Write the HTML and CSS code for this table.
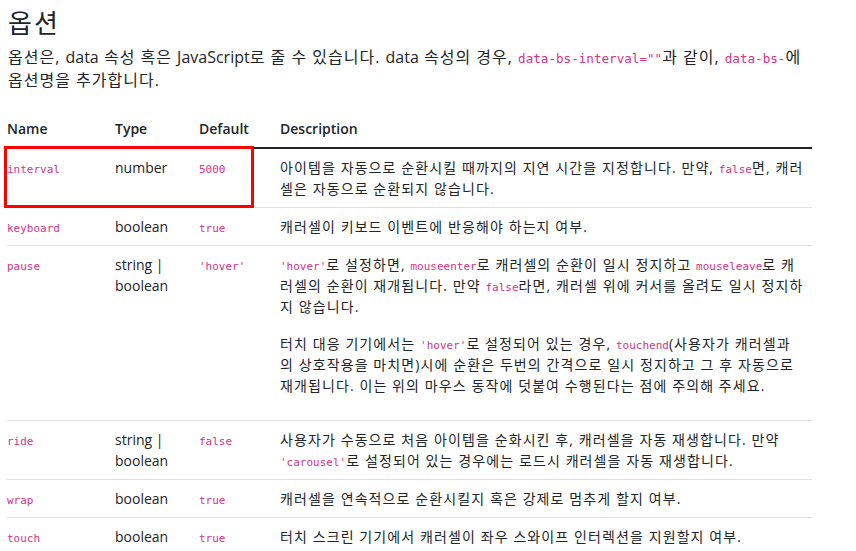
FILE: index.html
```html
<!DOCTYPE html>
<html lang="ko">
<head>
  <meta charset="UTF-8">
  <meta name="viewport" content="width=device-width, initial-scale=1.0">
  <title>옵션</title>
  <link rel="stylesheet" href="styles.css">
</head>
<body>
<div class="doc">
  <h2>옵션</h2>
  <p class="lead-text">옵션은, <span class="en">data</span> 속성 혹은 <span class="en">JavaScript</span>로 줄 수 있습니다. <span class="en">data</span> 속성의 경우, <code>data-bs-interval=""</code>과 같이, <code>data-bs-</code>에<br>옵션명을 추가합니다.</p>

  <div class="table-wrap">
    <table class="opt-table">
      <colgroup>
        <col class="c-name">
        <col class="c-type">
        <col class="c-default">
        <col>
      </colgroup>
      <thead>
        <tr>
          <th>Name</th>
          <th>Type</th>
          <th>Default</th>
          <th>Description</th>
        </tr>
      </thead>
      <tbody>
        <tr>
          <td><code>interval</code></td>
          <td>number</td>
          <td><code>5000</code></td>
          <td class="desc">아이템을 자동으로 순환시킬 때까지의 지연 시간을 지정합니다. 만약, <code>false</code>면, 캐러<br>셀은 자동으로 순환되지 않습니다.</td>
        </tr>
        <tr>
          <td><code>keyboard</code></td>
          <td>boolean</td>
          <td><code>true</code></td>
          <td class="desc">캐러셀이 키보드 이벤트에 반응해야 하는지 여부.</td>
        </tr>
        <tr>
          <td><code>pause</code></td>
          <td>string | boolean</td>
          <td><code>'hover'</code></td>
          <td class="desc">
            <p><code>'hover'</code>로 설정하면, <code>mouseenter</code>로 캐러셀의 순환이 일시 정지하고 <code>mouseleave</code>로 캐<br>러셀의 순환이 재개됩니다. 만약 <code>false</code>라면, 캐러셀 위에 커서를 올려도 일시 정지하<br>지 않습니다.</p>
            <p>터치 대응 기기에서는 <code>'hover'</code>로 설정되어 있는 경우, <code>touchend</code>(사용자가 캐러셀과<br>의 상호작용을 마치면)시에 순환은 두번의 간격으로 일시 정지하고 그 후 자동으로<br>재개됩니다. 이는 위의 마우스 동작에 덧붙여 수행된다는 점에 주의해 주세요.</p>
          </td>
        </tr>
        <tr>
          <td><code>ride</code></td>
          <td>string | boolean</td>
          <td><code>false</code></td>
          <td class="desc">사용자가 수동으로 처음 아이템을 순화시킨 후, 캐러셀을 자동 재생합니다. 만약<br><code>'carousel'</code>로 설정되어 있는 경우에는 로드시 캐러셀을 자동 재생합니다.</td>
        </tr>
        <tr>
          <td><code>wrap</code></td>
          <td>boolean</td>
          <td><code>true</code></td>
          <td class="desc">캐러셀을 연속적으로 순환시킬지 혹은 강제로 멈추게 할지 여부.</td>
        </tr>
        <tr>
          <td><code>touch</code></td>
          <td>boolean</td>
          <td><code>true</code></td>
          <td class="desc">터치 스크린 기기에서 캐러셀이 좌우 스와이프 인터렉션을 지원할지 여부.</td>
        </tr>
      </tbody>
    </table>
    <!-- 강조 표시 박스 -->
    <div class="highlight-box"></div>
  </div>
</div>
</body>
</html>
```

FILE: styles.css
```css
body {
  margin: 0;
  background: #ffffff;
  color: #212529;
  font-family: "Open Sans", "Noto Sans CJK KR", sans-serif;
  overflow: hidden;
}

.doc {
  width: 805px;
  padding-left: 7px;
}

h2 {
  margin: 0 0 7px 1px;
  padding-top: 8px;
  font-size: 26px;
  font-weight: 400;
  line-height: 31px;
  letter-spacing: 2px;
}

.lead-text {
  margin: 0 0 18px 1px;
  font-size: 16px;
  line-height: 23px;
  letter-spacing: 1px; /* 한글 폭 맞추기 */
  white-space: nowrap;
}

.lead-text .en {
  letter-spacing: 0;
}

code {
  font-family: "DejaVu Sans Mono", monospace;
  color: #d63384;
  line-height: 1;
  letter-spacing: 0;
}

.lead-text code {
  font-size: 12.6px;
}

.table-wrap {
  position: relative;
}

.opt-table {
  width: 100%;
  border-collapse: collapse;
  table-layout: fixed;
  font-size: 14px;
  line-height: 21px;
}

.c-name { width: 108px; }
.c-type { width: 84px; }
.c-default { width: 81px; }

.opt-table th,
.opt-table td {
  padding: 8px 8px 8px 0;
  text-align: left;
  vertical-align: top;
}

.opt-table th {
  font-weight: 600;
  border-bottom: 2px solid #212529;
}

.opt-table td {
  border-bottom: 1px solid #dee2e6;
}

.opt-table td.desc {
  letter-spacing: 1.1px;
}

.opt-table td code {
  font-size: 11px;
}

.opt-table td p {
  margin: 0 0 16px;
}

.highlight-box {
  position: absolute;
  left: -3px;
  top: 36px;
  width: 244px;
  height: 56px;
  border: 3px solid #ff0000;
}
```
